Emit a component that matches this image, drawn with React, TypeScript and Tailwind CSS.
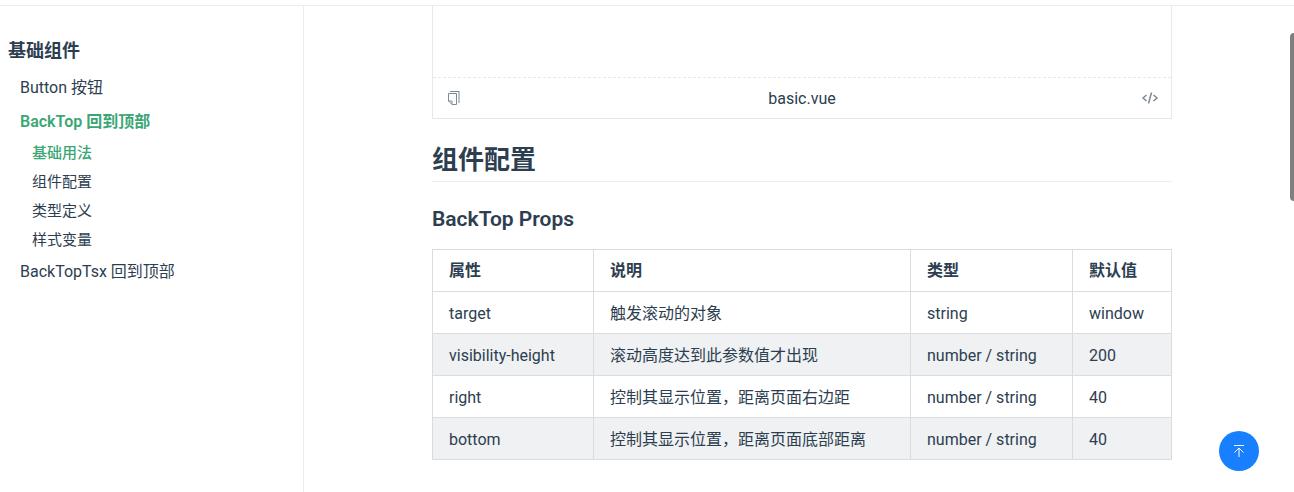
import React from "react";

interface PropRow {
  name: string;
  desc: string;
  type: string;
  initial: string;
}

const anchors = ["基础用法", "组件配置", "类型定义", "样式变量"];

const rows: PropRow[] = [
  { name: "target", desc: "触发滚动的对象", type: "string", initial: "window" },
  { name: "visibility-height", desc: "滚动高度达到此参数值才出现", type: "number / string", initial: "200" },
  { name: "right", desc: "控制其显示位置，距离页面右边距", type: "number / string", initial: "40" },
  { name: "bottom", desc: "控制其显示位置，距离页面底部距离", type: "number / string", initial: "40" },
];

const Sidebar = () => (
  <aside className="w-[304px] shrink-0 border-r border-[#eaecef] pt-[33px]">
    <h2 className="px-2 text-lg leading-6 font-bold">基础组件</h2>
    <ul className="mt-2 leading-[34px]">
      <li>
        <a href="#button" className="block pl-5">Button 按钮</a>
      </li>
      <li>
        <a href="#backtop" className="block pl-5 font-semibold text-[#3aa675]">BackTop 回到顶部</a>
        <ul className="text-[15px] leading-[29px]">
          {anchors.map((anchor, i) => (
            <li key={anchor}>
              <a href={`#${anchor}`} className={i === 0 ? "block pl-8 font-medium text-[#3aa675]" : "block pl-8"}>
                {anchor}
              </a>
            </li>
          ))}
        </ul>
      </li>
      <li>
        <a href="#backtop-tsx" className="block pl-5">BackTopTsx 回到顶部</a>
      </li>
    </ul>
  </aside>
);

const DemoBlock = () => (
  <div className="border border-t-0 border-[#e6e8eb]">
    <div className="h-[71px]" />
    <div className="flex h-[41px] items-center justify-between border-t border-dashed border-[#e6e8eb] px-3">
      <button type="button" aria-label="复制代码" className="flex size-[18px] items-center justify-center text-[#7f8995]">
        <svg width="14" height="16" viewBox="0 0 14 16" fill="none" stroke="currentColor">
          <path d="M3 1.500h9.500" />
          <path d="M12 2v11" strokeWidth="2" strokeOpacity="0.500" />
          <path d="M1.500 3.500h8v11H5l-3.500-3.500z" />
          <path d="M1.500 11H5v3.500" />
        </svg>
      </button>
      <span className="pt-0.5">basic.vue</span>
      <button type="button" aria-label="查看代码" className="flex size-[18px] items-center justify-center text-[#7f8995]">
        <svg width="18" height="16" viewBox="0 0 18 16" fill="none" stroke="currentColor" strokeWidth="1.500">
          <path d="M5.500 5L2 8l3.500 3M12.500 5L16 8l-3.500 3M10.500 2.500l-3 11" />
        </svg>
      </button>
    </div>
  </div>
);

const PropsTable = () => (
  <table className="mt-4 w-full table-fixed border-collapse text-left">
    <colgroup>
      <col className="w-[161px]" />
      <col className="w-[317px]" />
      <col className="w-[162px]" />
      <col />
    </colgroup>
    <thead>
      <tr>
        {["属性", "说明", "类型", "默认值"].map((label) => (
          <th key={label} scope="col" className="border border-[#dadde0] px-4 py-2 leading-[25px] font-bold">
            {label}
          </th>
        ))}
      </tr>
    </thead>
    <tbody>
      {rows.map((row) => (
        <tr key={row.name} className="even:bg-[#f0f1f3]">
          {[row.name, row.desc, row.type, row.initial].map((cell, i) => (
            <td key={i} className="border border-[#dadde0] px-4 pt-[9px] pb-[7px] leading-[25px]">
              {cell}
            </td>
          ))}
        </tr>
      ))}
    </tbody>
  </table>
);

export default function App() {
  return (
    <div className="flex h-screen flex-col overflow-hidden bg-white font-['Roboto','Noto_Sans_CJK_SC',sans-serif] text-base text-[#2c3e50]">
      <header className="h-1.5 shrink-0 border-b border-[#eaecef]" />
      <div className="flex min-h-0 flex-1">
        <Sidebar />
        <main className="min-w-0 flex-1 pl-1.5">
          <div className="mx-auto max-w-[740px]">
            <DemoBlock />
            <h2 className="mt-6 border-b border-[#eaecef] pb-1 text-[26px] leading-[34px] font-bold">组件配置</h2>
            <h3 className="mt-6 text-[21px] leading-[27px] font-semibold">BackTop Props</h3>
            <PropsTable />
          </div>
        </main>
      </div>

      <button
        type="button"
        aria-label="回到顶部"
        className="fixed right-[35px] bottom-[21px] flex size-10 items-center justify-center rounded-full bg-[#1880ff] text-white"
      >
        <svg width="14" height="14" viewBox="0 0 14 14" fill="none" stroke="currentColor">
          <path d="M2 1.500h10M7 13V4M2.500 8.500L7 4l4.500 4.500" />
        </svg>
      </button>
      <div className="fixed top-[33px] right-0 h-[168px] w-1 rounded-l-sm bg-[#7f7f7f]" />
    </div>
  );
}
